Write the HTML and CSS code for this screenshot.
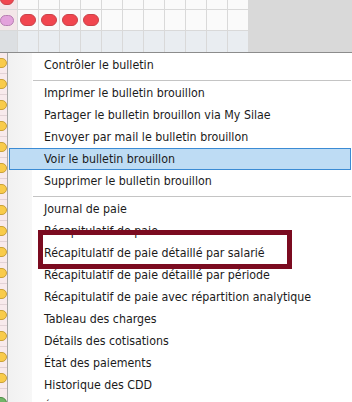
FILE: index.html
```html
<!DOCTYPE html>
<html lang="fr">
<head>
    <meta charset="UTF-8">
    <meta name="viewport" content="width=device-width, initial-scale=1.0">
    <title>Menu bulletin</title>
    <link rel="stylesheet" href="styles.css">
</head>
<body>
    <div class="top">
        <div class="planning">
            <div class="cell head"><span class="pill red cut"></span></div>
            <div class="cell"></div><div class="cell"></div><div class="cell"></div><div class="cell"></div>
            <div class="cell"></div><div class="cell"></div><div class="cell"></div><div class="cell"></div>
            <div class="cell"></div><div class="cell"></div><div class="cell"></div>

            <div class="cell head"><span class="pill pink"></span></div>
            <div class="cell"><span class="pill red"></span></div>
            <div class="cell"><span class="pill red"></span></div>
            <div class="cell"><span class="pill red"></span></div>
            <div class="cell"><span class="pill red"></span></div>
            <div class="cell"></div><div class="cell"></div><div class="cell"></div><div class="cell"></div>
            <div class="cell"></div><div class="cell"></div><div class="cell"></div>

            <div class="cell head week"></div>
            <div class="cell week"></div><div class="cell week"></div><div class="cell week"></div><div class="cell week"></div>
            <div class="cell week"></div><div class="cell week"></div><div class="cell week"></div><div class="cell week"></div>
            <div class="cell week"></div><div class="cell week"></div><div class="cell week"></div>
        </div>
        <div class="filler"></div>
    </div>

    <div class="main">
        <div class="strip">
            <div class="strip-row"><span class="pill yellow"></span></div>
            <div class="strip-row"><span class="pill yellow"></span></div>
            <div class="strip-row"><span class="pill yellow"></span></div>
            <div class="strip-row"><span class="pill yellow"></span></div>
            <div class="strip-row"><span class="pill yellow"></span></div>
            <div class="strip-row"><span class="pill yellow"></span></div>
            <div class="strip-row"><span class="pill yellow"></span></div>
            <div class="strip-row"><span class="pill yellow"></span></div>
            <div class="strip-row"><span class="pill yellow"></span></div>
            <div class="strip-row"><span class="pill yellow"></span></div>
            <div class="strip-row"><span class="pill yellow"></span></div>
            <div class="strip-row"><span class="pill yellow"></span></div>
            <div class="strip-row"><span class="pill yellow"></span></div>
            <div class="strip-row"><span class="pill yellow"></span></div>
            <div class="strip-row"><span class="pill yellow"></span></div>
            <div class="strip-row"><span class="pill yellow"></span></div>
            <div class="strip-row"><span class="pill green"></span></div>
        </div>

        <ul class="menu">
            <li class="item">Contrôler le bulletin</li>
            <li class="sep"></li>
            <li class="item">Imprimer le bulletin brouillon</li>
            <li class="item">Partager le bulletin brouillon via My Silae</li>
            <li class="item">Envoyer par mail le bulletin brouillon</li>
            <li class="item active">Voir le bulletin brouillon</li>
            <li class="item">Supprimer le bulletin brouillon</li>
            <li class="sep"></li>
            <li class="item">Journal de paie</li>
            <li class="item">Récapitulatif de paie</li>
            <li class="item">Récapitulatif de paie détaillé par salarié</li>
            <li class="item">Récapitulatif de paie détaillé par période</li>
            <li class="item">Récapitulatif de paie avec répartition analytique</li>
            <li class="item">Tableau des charges</li>
            <li class="item">Détails des cotisations</li>
            <li class="item">État des paiements</li>
            <li class="item">Historique des CDD</li>
            <li class="item">Éditions annuelles</li>
        </ul>
    </div>

    <!-- encadré rouge autour de l'entrée -->
    <div class="callout"></div>
</body>
</html>
```

FILE: styles.css
```css
    body {
        margin: 0;
        width: 352px;
        height: 402px;
        overflow: hidden;
        position: relative;
        background: #ffffff;
        font-family: "DejaVu Sans Condensed", "DejaVu Sans", sans-serif;
        font-stretch: condensed;
        color: #1b1b1b;
    }

    .top {
        display: flex;
        border-bottom: 1px solid #8c8c8c;
    }

    .planning {
        display: grid;
        grid-template-columns: 17px repeat(11, 20px);
        grid-template-rows: 9px 20px 21px;
        gap: 1px;
        width: 248px;
        background: #d9d9d9;
    }

    .cell {
        background: #fafafa;
        display: flex;
        align-items: center;
        padding-left: 2px;
        overflow: hidden;
    }

    .cell.head {
        background: #f3e6e8;
        padding-left: 0;
    }

    .cell.week {
        background: #e9edf1;
    }

    .cell.head.week {
        background: #dcdfe2;
    }

    .filler {
        flex: 1;
        background: #d9d9d9;
    }

    .pill {
        display: block;
        flex-shrink: 0;
        box-sizing: border-box;
        border-radius: 6px;
    }

    .pill.red {
        width: 16px;
        height: 12px;
        background: #f1464f;
        border: 1px solid #c9434a;
    }

    .pill.red.cut {
        width: 14px;
        margin-top: -11px;
    }

    .pill.pink {
        width: 14px;
        height: 11px;
        background: #e3a2dc;
        border: 1px solid #b77fb2;
    }

    .main {
        display: flex;
    }

    .strip {
        width: 7px;
        border-right: 1px solid #a9a9a9;
        overflow: hidden;
    }

    .strip-row {
        height: 20px;
        border-bottom: 1px solid #e3d3d6;
        background: #f8eaec;
        display: flex;
        align-items: center;
    }

    .pill.yellow {
        width: 15px;
        height: 10px;
        margin-left: -8px;
        background: #f9cb4a;
        border: 1px solid #c9a23a;
    }

    .pill.green {
        width: 15px;
        height: 12px;
        margin-left: -8px;
        margin-top: 8px;
        background: #72b567;
        border: 1px solid #4f8c46;
    }

    .menu {
        flex: 1;
        list-style: none;
        margin: 0;
        padding: 1px 0 0;
        font-size: 12.3px;
        background: linear-gradient(to right, #f1f1f1 0, #f7f7f7 24px, #ffffff 24px);
    }

    .item {
        box-sizing: border-box;
        height: 22px;
        line-height: 20px;
        margin: 0 1px;
        padding-left: 34px;
        border: 1px solid transparent;
        white-space: nowrap;
    }

    .item.active {
        background: #bedcf4;
        border-color: #3b8bd4;
    }

    .sep {
        height: 1px;
        margin: 4px 1px 1px 25px;
        background: #c4c4c4;
    }

    .callout {
        position: absolute;
        left: 38px;
        top: 230px;
        width: 244px;
        height: 29px;
        border: 5px solid #7b0b20;
    }
```
